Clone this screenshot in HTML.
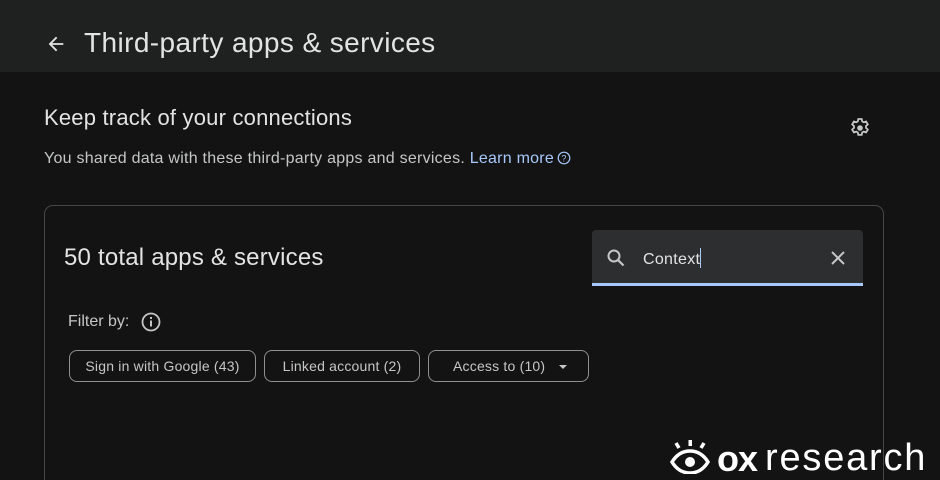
<!DOCTYPE html>
<html><head><meta charset="utf-8"><style>
*{margin:0;padding:0;box-sizing:border-box}
html,body{width:940px;height:480px;overflow:hidden}
body{background:#131313;font-family:"Liberation Sans",sans-serif;color:#e3e3e3;position:relative}
.hdr{position:absolute;left:0;top:0;width:940px;height:72px;background:#1f2020}
.t{position:absolute;white-space:nowrap}
.card{position:absolute;left:44px;top:205px;width:840px;height:275px;border:1px solid #444746;border-bottom:0;border-radius:9px 9px 0 0}
.chip{position:absolute;top:350px;height:32px;border:1px solid #8e918f;border-radius:8px;font-size:14px;color:#c4c7c5;line-height:30px;text-align:center;letter-spacing:.2px}
</style></head><body>
<div class="hdr"></div>
<svg class="t" style="left:45px;top:33px" width="22" height="22" viewBox="0 0 24 24"><path d="M20 11H7.8l5.6-5.6L12 4l-8 8 8 8 1.4-1.4L7.8 13H20z" fill="#e3e3e3"/></svg>
<div class="t" style="left:84px;top:27px;font-size:28px;letter-spacing:.4px;color:#e3e3e3">Third-party apps &amp; services</div>
<div class="t" style="left:44px;top:105px;font-size:22px;letter-spacing:.2px">Keep track of your connections</div>
<div class="t" style="left:44px;top:150px;font-size:16px;letter-spacing:.25px;color:#c4c7c5">You shared data with these third-party apps and services. <span style="color:#a8c7fa">Learn more</span><svg style="vertical-align:-2px;margin-left:3px" width="14" height="14" viewBox="0 0 14 14"><circle cx="7" cy="7" r="5.8" fill="none" stroke="#a8c7fa" stroke-width="1.2"/><text x="7" y="10.3" font-size="9" text-anchor="middle" fill="#a8c7fa" font-family="Liberation Sans">?</text></svg></div>
<svg class="t" style="left:848px;top:116px" width="24" height="24" viewBox="0 0 24 24"><path fill="none" stroke="#c4c7c5" stroke-width="1.8" d="M10.3 3h3.4l.5 2.4 1.6.9 2.3-.8 1.7 2.9-1.8 1.6v1.9l1.8 1.6-1.7 2.9-2.3-.8-1.6.9-.5 2.4h-3.4l-.5-2.4-1.6-.9-2.3.8-1.7-2.9 1.8-1.6V10L4.2 8.4l1.7-2.9 2.3.8 1.6-.9z"/><circle cx="12" cy="12" r="2.8" fill="#c4c7c5"/></svg>
<div class="card"></div>
<div class="t" style="left:64px;top:244px;font-size:24px;letter-spacing:.2px">50 total apps &amp; services</div>
<div class="t" style="left:592px;top:230px;width:271px;height:56px;background:#2d2e30;border-radius:4px 4px 0 0;border-bottom:3px solid #a8c7fa"></div>
<svg class="t" style="left:604px;top:246px" width="24" height="24" viewBox="0 0 24 24"><circle cx="10" cy="10" r="5.5" fill="none" stroke="#c4c7c5" stroke-width="2"/><path d="M14 14l5.5 5.5" stroke="#c4c7c5" stroke-width="2.2"/></svg>
<div class="t" style="left:643px;top:248px;font-size:16px;letter-spacing:.3px;color:#e3e3e3">Context<span style="display:inline-block;width:1px;height:20px;background:#a8c7fa;vertical-align:-4px"></span></div>
<svg class="t" style="left:828px;top:248px" width="20" height="20" viewBox="0 0 20 20"><path d="M4 4l12 12M16 4L4 16" stroke="#c4c7c5" stroke-width="2"/></svg>
<div class="t" style="left:68px;top:313px;font-size:16px;color:#c4c7c5">Filter by:</div>
<svg class="t" style="left:140px;top:311px" width="22" height="22" viewBox="0 0 22 22"><circle cx="11" cy="11" r="8.5" fill="none" stroke="#c4c7c5" stroke-width="1.8"/><rect x="10" y="9.5" width="2" height="6" fill="#c4c7c5"/><rect x="10" y="6" width="2" height="2" fill="#c4c7c5"/></svg>
<div class="chip" style="left:69px;width:187px">Sign in with Google (43)</div>
<div class="chip" style="left:264px;width:156px">Linked account (2)</div>
<div class="chip" style="left:428px;width:161px;text-align:left;padding-left:24px">Access to (10)<span style="position:absolute;left:130px;top:14px;border:4px solid transparent;border-top:4px solid #c4c7c5;border-bottom:0"></span></div>
<svg class="t" style="left:669px;top:440px" width="42" height="34" viewBox="0 0 42 34"><path d="M3 22c5-8 11-11 18-11s13 3 18 11c-5 8-11 11-18 11S8 30 3 22z" fill="none" stroke="#fff" stroke-width="3.5"/><circle cx="21" cy="22" r="5" fill="#fff"/><rect x="19.5" y="0" width="3.5" height="6" fill="#fff"/><path d="M7 3l3 5M35 3l-3 5" stroke="#fff" stroke-width="3.5"/></svg>
<div class="t" style="left:717px;top:439px;font-size:36px;line-height:40px;color:#fff;font-weight:bold;letter-spacing:-1px">ox</div>
<div class="t" style="left:765px;top:437px;font-size:38px;line-height:42px;color:#fff;letter-spacing:1.8px">research</div>
</body></html>
